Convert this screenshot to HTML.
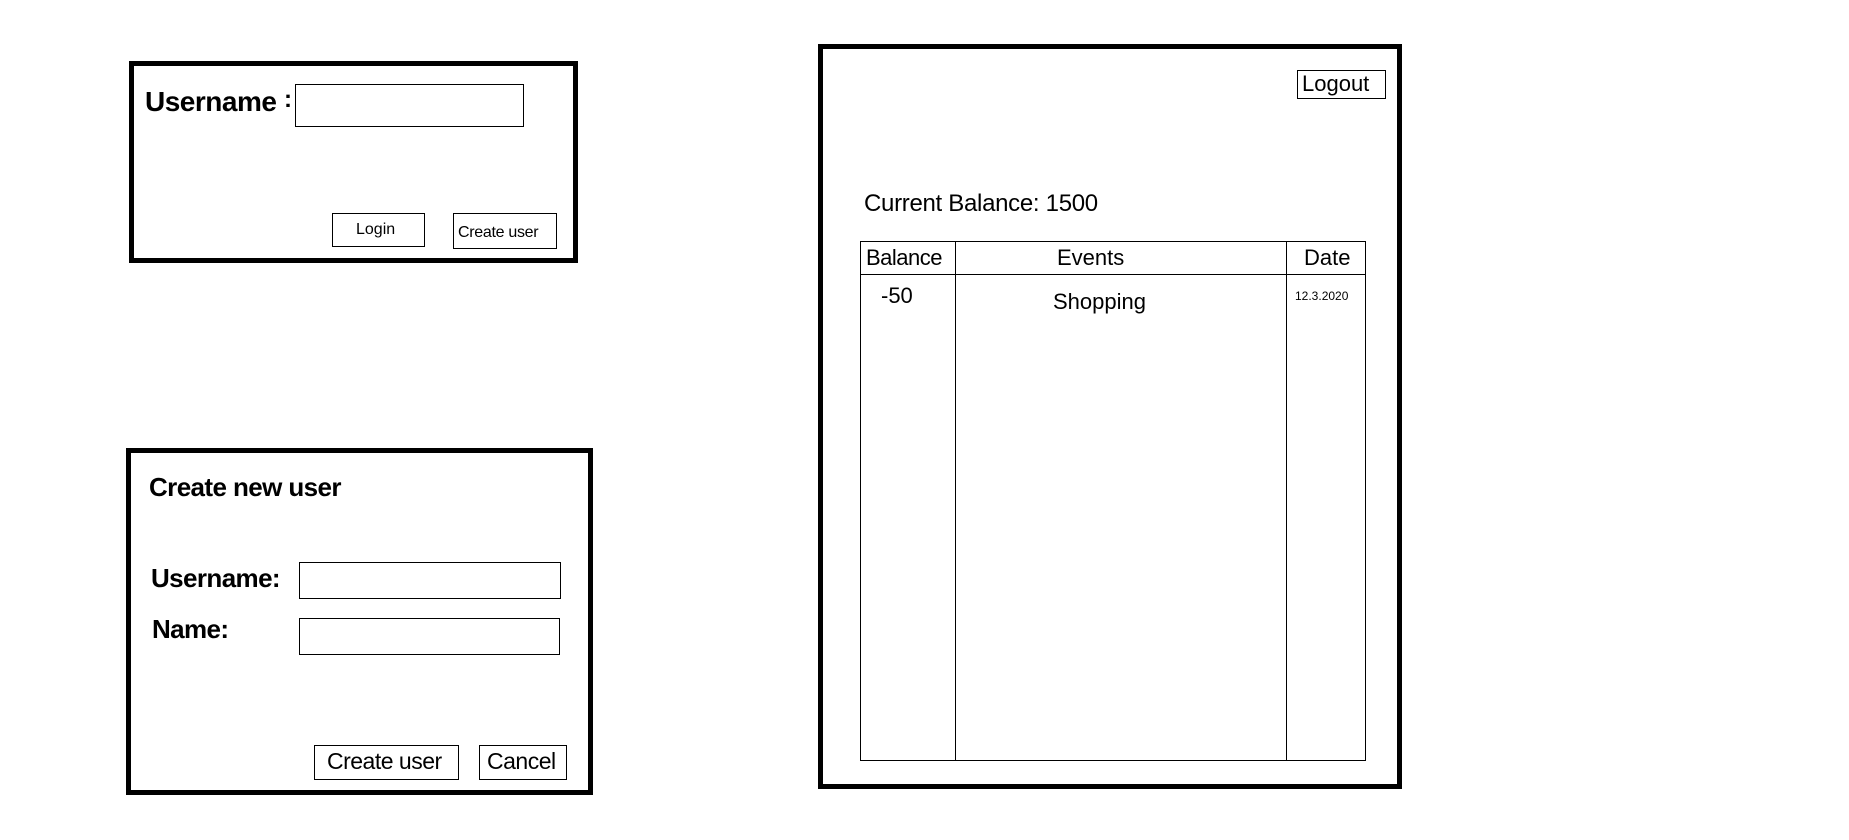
<!DOCTYPE html>
<html><head><meta charset="utf-8"><style>
html,body{margin:0;padding:0;background:#fff;width:1849px;height:840px;overflow:hidden;font-family:"Liberation Sans",sans-serif;color:#000}
.a{position:absolute;box-sizing:border-box}
.box{border:5px solid #000}
.in{border:1px solid #000}
.t{position:absolute;white-space:nowrap;line-height:1}
</style></head><body>
<div class="a box" style="left:129px;top:61px;width:449px;height:202px"></div>
<div class="t" style="left:145px;top:88px;font-size:28px;font-weight:bold;letter-spacing:-0.5px">Username</div>
<div class="t" style="left:284px;top:88px;font-size:24px;font-weight:bold">:</div>
<div class="a in" style="left:295px;top:84px;width:229px;height:43px"></div>
<div class="a in" style="left:332px;top:213px;width:93px;height:34px"></div>
<div class="t" style="left:356px;top:222px;font-size:16px">Login</div>
<div class="a in" style="left:453px;top:213px;width:104px;height:36px"></div>
<div class="t" style="left:458px;top:225px;font-size:16px;letter-spacing:-0.3px">Create user</div>

<div class="a box" style="left:126px;top:448px;width:467px;height:347px"></div>
<div class="t" style="left:149px;top:474px;font-size:26px;font-weight:bold;letter-spacing:-0.6px">Create new user</div>
<div class="t" style="left:151px;top:565px;font-size:26px;font-weight:bold;letter-spacing:-0.6px">Username:</div>
<div class="t" style="left:152px;top:616px;font-size:26px;font-weight:bold;letter-spacing:-0.6px">Name:</div>
<div class="a in" style="left:299px;top:562px;width:262px;height:37px"></div>
<div class="a in" style="left:299px;top:618px;width:261px;height:37px"></div>
<div class="a in" style="left:314px;top:745px;width:145px;height:35px"></div>
<div class="t" style="left:327px;top:750px;font-size:23px;letter-spacing:-0.5px">Create user</div>
<div class="a in" style="left:479px;top:745px;width:88px;height:35px"></div>
<div class="t" style="left:487px;top:750px;font-size:23px;letter-spacing:-0.5px">Cancel</div>

<div class="a box" style="left:818px;top:44px;width:584px;height:745px"></div>
<div class="a in" style="left:1297px;top:70px;width:89px;height:29px"></div>
<div class="t" style="left:1302px;top:73px;font-size:22px">Logout</div>
<div class="t" style="left:864px;top:192px;font-size:24px;letter-spacing:-0.3px">Current Balance: 1500</div>
<div class="a in" style="left:860px;top:241px;width:506px;height:520px"></div>
<div class="a" style="left:860px;top:274px;width:506px;height:1px;background:#000"></div>
<div class="a" style="left:955px;top:241px;width:1px;height:520px;background:#000"></div>
<div class="a" style="left:1286px;top:241px;width:1px;height:520px;background:#000"></div>
<div class="t" style="left:866px;top:247px;font-size:22px;letter-spacing:-0.5px">Balance</div>
<div class="t" style="left:1057px;top:247px;font-size:22px">Events</div>
<div class="t" style="left:1304px;top:247px;font-size:22px">Date</div>
<div class="t" style="left:881px;top:285px;font-size:22px">-50</div>
<div class="t" style="left:1053px;top:291px;font-size:22px">Shopping</div>
<div class="t" style="left:1295px;top:290px;font-size:12px">12.3.2020</div>
</body></html>
